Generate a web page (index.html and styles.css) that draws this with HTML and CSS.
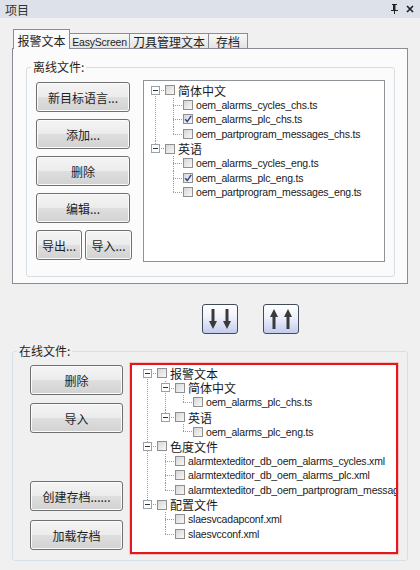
FILE: index.html
```html
<!DOCTYPE html>
<html lang="zh">
<head>
  <meta charset="UTF-8">
  <title>项目</title>
  <link rel="stylesheet" href="styles.css">
</head>
<body>
  <div class="titlebar">
    <span class="title">项目</span>
    <span class="tb-icons">
      <svg width="7" height="10" viewBox="0 0 7 10"><rect x="1" y="0" width="5" height="1" fill="#222"/><rect x="2" y="1" width="2" height="5" fill="#222"/><rect x="4" y="1" width="1" height="5" fill="#888"/><rect x="0" y="6" width="7" height="1" fill="#222"/><rect x="3" y="7" width="1" height="3" fill="#222"/></svg>
      <svg width="8" height="8" viewBox="0 0 8 8"><path d="M1 1 L7 7 M7 1 L1 7" stroke="#222" stroke-width="1.7"/></svg>
    </span>
  </div>

  <div class="tabs">
    <div class="tab on zh" style="width:57px">报警文本</div>
    <div class="tab en" style="width:61px">EasyScreen</div>
    <div class="tab zh" style="width:80px">刀具管理文本</div>
    <div class="tab zh" style="width:40px">存档</div>
  </div>

  <div class="panel">
    <fieldset class="group offline">
      <legend>离线文件:</legend>
      <div class="off-body">
        <div class="off-btns">
          <button class="btn">新目标语言...</button>
          <button class="btn">添加...</button>
          <button class="btn">删除</button>
          <button class="btn">编辑...</button>
          <div class="pair">
            <button class="btn">导出...</button>
            <button class="btn">导入...</button>
          </div>
        </div>
        <div class="tree off-tree">
          <ul>
            <li>
              <div class="row"><span class="exp"><span class="tog"></span></span><span class="cb"></span><span class="lbl zh">简体中文</span></div>
              <ul>
                <li><div class="row"><span class="exp"></span><span class="cb"></span><span class="lbl en">oem_alarms_cycles_chs.ts</span></div></li>
                <li><div class="row"><span class="exp"></span><span class="cb"><svg width="8" height="8" viewBox="0 0 8 8"><path d="M1.2 4.2 L3.3 6.6 L7.2 0.8" stroke="#2d4696" stroke-width="1.5" fill="none"/></svg></span><span class="lbl en">oem_alarms_plc_chs.ts</span></div></li>
                <li><div class="row"><span class="exp"></span><span class="cb"></span><span class="lbl en">oem_partprogram_messages_chs.ts</span></div></li>
              </ul>
            </li>
            <li>
              <div class="row"><span class="exp"><span class="tog"></span></span><span class="cb"></span><span class="lbl zh">英语</span></div>
              <ul>
                <li><div class="row"><span class="exp"></span><span class="cb"></span><span class="lbl en">oem_alarms_cycles_eng.ts</span></div></li>
                <li><div class="row"><span class="exp"></span><span class="cb"><svg width="8" height="8" viewBox="0 0 8 8"><path d="M1.2 4.2 L3.3 6.6 L7.2 0.8" stroke="#2d4696" stroke-width="1.5" fill="none"/></svg></span><span class="lbl en">oem_alarms_plc_eng.ts</span></div></li>
                <li><div class="row"><span class="exp"></span><span class="cb"></span><span class="lbl en">oem_partprogram_messages_eng.ts</span></div></li>
              </ul>
            </li>
          </ul>
        </div>
      </div>
    </fieldset>
  </div>

  <div class="moves">
    <button class="move">
      <svg width="34" height="28" viewBox="0 0 34 28"><rect x="8.5" y="4" width="3" height="14" fill="#3a3a3a"/><polygon points="6,16 14,16 10,24" fill="#3a3a3a"/><rect x="22.5" y="4" width="3" height="14" fill="#3a3a3a"/><polygon points="20,16 28,16 24,24" fill="#3a3a3a"/></svg>
    </button>
    <button class="move">
      <svg width="34" height="28" viewBox="0 0 34 28"><rect x="8.5" y="10" width="3" height="14" fill="#3a3a3a"/><polygon points="6,12 14,12 10,4" fill="#3a3a3a"/><rect x="22.5" y="10" width="3" height="14" fill="#3a3a3a"/><polygon points="20,12 28,12 24,4" fill="#3a3a3a"/></svg>
    </button>
  </div>

  <fieldset class="group online">
    <legend>在线文件:</legend>
    <div class="on-body">
      <div class="on-btns">
        <button class="btn">删除</button>
        <button class="btn">导入</button>
        <button class="btn">创建存档......</button>
        <button class="btn">加载存档</button>
      </div>
      <div class="tree on-tree">
        <ul>
          <li>
            <div class="row"><span class="exp"><span class="tog"></span></span><span class="cb"></span><span class="lbl zh">报警文本</span></div>
            <ul>
              <li>
                <div class="row"><span class="exp"><span class="tog"></span></span><span class="cb"></span><span class="lbl zh">简体中文</span></div>
                <ul>
                  <li><div class="row"><span class="exp"></span><span class="cb"></span><span class="lbl en">oem_alarms_plc_chs.ts</span></div></li>
                </ul>
              </li>
              <li>
                <div class="row"><span class="exp"><span class="tog"></span></span><span class="cb"></span><span class="lbl zh">英语</span></div>
                <ul>
                  <li><div class="row"><span class="exp"></span><span class="cb"></span><span class="lbl en">oem_alarms_plc_eng.ts</span></div></li>
                </ul>
              </li>
            </ul>
          </li>
          <li>
            <div class="row"><span class="exp"><span class="tog"></span></span><span class="cb"></span><span class="lbl zh">色度文件</span></div>
            <ul>
              <li><div class="row"><span class="exp"></span><span class="cb"></span><span class="lbl en">alarmtexteditor_db_oem_alarms_cycles.xml</span></div></li>
              <li><div class="row"><span class="exp"></span><span class="cb"></span><span class="lbl en">alarmtexteditor_db_oem_alarms_plc.xml</span></div></li>
              <li><div class="row"><span class="exp"></span><span class="cb"></span><span class="lbl en">alarmtexteditor_db_oem_partprogram_messages.xml</span></div></li>
            </ul>
          </li>
          <li>
            <div class="row"><span class="exp"><span class="tog"></span></span><span class="cb"></span><span class="lbl zh">配置文件</span></div>
            <ul>
              <li><div class="row"><span class="exp"></span><span class="cb"></span><span class="lbl en">slaesvcadapconf.xml</span></div></li>
              <li><div class="row"><span class="exp"></span><span class="cb"></span><span class="lbl en">slaesvcconf.xml</span></div></li>
            </ul>
          </li>
        </ul>
      </div>
    </div>
  </fieldset>
</body>
</html>
```

FILE: styles.css
```css
body {
  margin: 0;
  width: 420px;
  height: 570px;
  overflow: hidden;
  background: #f0f0f0;
  font-family: "Liberation Sans", "Noto Sans CJK SC", sans-serif;
  font-size: 12px;
  color: #1e1e1e;
}

.zh {
  font-family: "Noto Sans CJK SC", sans-serif;
  font-size: 12px;
}

.en {
  font-family: "Liberation Sans", sans-serif;
  font-size: 10.5px;
  letter-spacing: -0.2px;
}

.titlebar {
  height: 18px;
  background: #dde2ea;
  display: flex;
  align-items: center;
  padding: 0 6px 0 5px;
  font-family: "Noto Sans CJK SC", sans-serif;
  color: #333;
}

.title {
  flex: 1;
}

.tb-icons {
  display: flex;
  align-items: center;
  gap: 8px;
}

/* tabs */
.tabs {
  display: flex;
  align-items: flex-end;
  margin: 11px 0 0 13px;
}

.tab {
  box-sizing: border-box;
  height: 15px;
  border: 1px solid #898c95;
  border-bottom: 0;
  margin-left: -1px;
  display: flex;
  align-items: center;
  justify-content: center;
  padding-top: 2px;
  background: linear-gradient(#f8f8f8, #e4e4e4);
  line-height: 12px;
}

.tab:first-child {
  margin-left: 0;
}

.tab.on {
  position: relative;
  height: 20px;
  margin-bottom: -1px;
  padding-top: 3px;
  background: #fbfbfb;
}

.panel {
  margin: 0 12px;
  border: 1px solid #898c95;
  background: #fbfbfb;
  padding: 11px 12px 6px 13px;
}

/* group boxes */
.group {
  margin: 0;
  border: 1px solid #d5dfe5;
  border-radius: 3px;
  min-width: 0;
}

.group legend {
  padding: 0 2px;
  line-height: 14px;
  font-family: "Noto Sans CJK SC", sans-serif;
  font-size: 12px;
  color: #1e1e1e;
}

.offline {
  padding: 6px 9px 14px 9px;
}

.offline legend {
  margin-left: -5px;
}

.online {
  margin: 10px 12px 0;
  padding: 5px 9px 6px 17px;
}

.online legend {
  margin-left: -13px;
}

/* buttons */
.btn {
  box-sizing: border-box;
  width: 94px;
  height: 30px;
  margin: 0;
  padding: 0;
  border: 1px solid #707070;
  border-radius: 3px;
  background: linear-gradient(#f4f4f4 0%, #ececec 48%, #dedede 52%, #d2d2d2 100%);
  box-shadow: inset 0 0 0 1px #fbfbfb;
  font-family: "Noto Sans CJK SC", sans-serif;
  font-size: 12px;
  color: #1e1e1e;
}

.off-body {
  display: flex;
  gap: 11px;
}

.off-btns {
  width: 96px;
  margin-top: 2px;
  display: flex;
  flex-direction: column;
  gap: 7px;
}

.pair {
  display: flex;
  gap: 3px;
}

.pair .btn {
  width: 46px;
}

.pair .btn + .btn {
  width: 47px;
}

.moves {
  display: flex;
  gap: 25px;
  margin: 20px 0 0 202px;
}

.move {
  box-sizing: border-box;
  width: 36px;
  height: 30px;
  padding: 0;
  margin: 0;
  border: 1px solid #414b5a;
  border-radius: 3px;
  background: linear-gradient(#ffffff 0%, #eef1fa 45%, #d6dcf3 75%, #c4ccee 100%);
  display: flex;
}

.on-body {
  display: flex;
  gap: 7px;
}

.on-btns {
  width: 93px;
  margin-top: 2px;
  display: flex;
  flex-direction: column;
}

.on-btns .btn {
  width: 93px;
}

.on-btns .btn:nth-child(2) {
  margin-top: 8px;
}

.on-btns .btn:nth-child(3) {
  margin-top: 48px;
}

.on-btns .btn:nth-child(4) {
  margin-top: 9px;
}

/* tree views */
.tree {
  box-sizing: border-box;
  background: #fff;
  overflow: hidden;
}

.off-tree {
  width: 242px;
  height: 182px;
  border: 1px solid #8e9397;
  padding: 2px 0 0 3px;
}

.on-tree {
  width: 268px;
  height: 191px;
  border: 2px solid #e2161d;
  box-shadow: 0 0 0 1px #f3c2c2;
  padding: 1px 0 0 7px;
}

.tree ul {
  list-style: none;
  margin: 0;
  padding: 0;
}

.tree ul ul {
  padding-left: 18px;
}

.tree li {
  background: repeating-linear-gradient(#9a9a9a 0 1px, transparent 1px 2px) 8px 0 / 1px 100% no-repeat;
}

.tree li:last-child {
  background-size: 1px 8px;
}

.tree > ul > li:first-child {
  background-position: 8px 7px;
}

.row {
  height: 14.6px;
  display: flex;
  align-items: center;
  white-space: nowrap;
  background: repeating-linear-gradient(to right, #9a9a9a 0 1px, transparent 1px 2px) 8px 7px / 10px 1px no-repeat;
}

.exp {
  width: 18px;
  flex: none;
  display: flex;
  align-items: center;
}

.tog {
  box-sizing: border-box;
  width: 9px;
  height: 9px;
  margin-left: 4px;
  border: 1px solid #98a2ab;
  background: linear-gradient(#333, #333) center / 5px 1px no-repeat, #fff;
}

.cb {
  box-sizing: border-box;
  width: 10px;
  height: 10px;
  flex: none;
  border: 1px solid #8f8f8f;
  background: linear-gradient(135deg, #d6d6d6, #f8f8f8);
  display: flex;
  align-items: center;
  justify-content: center;
}

.lbl {
  margin-left: 3px;
  color: #1a1a1a;
}
```
